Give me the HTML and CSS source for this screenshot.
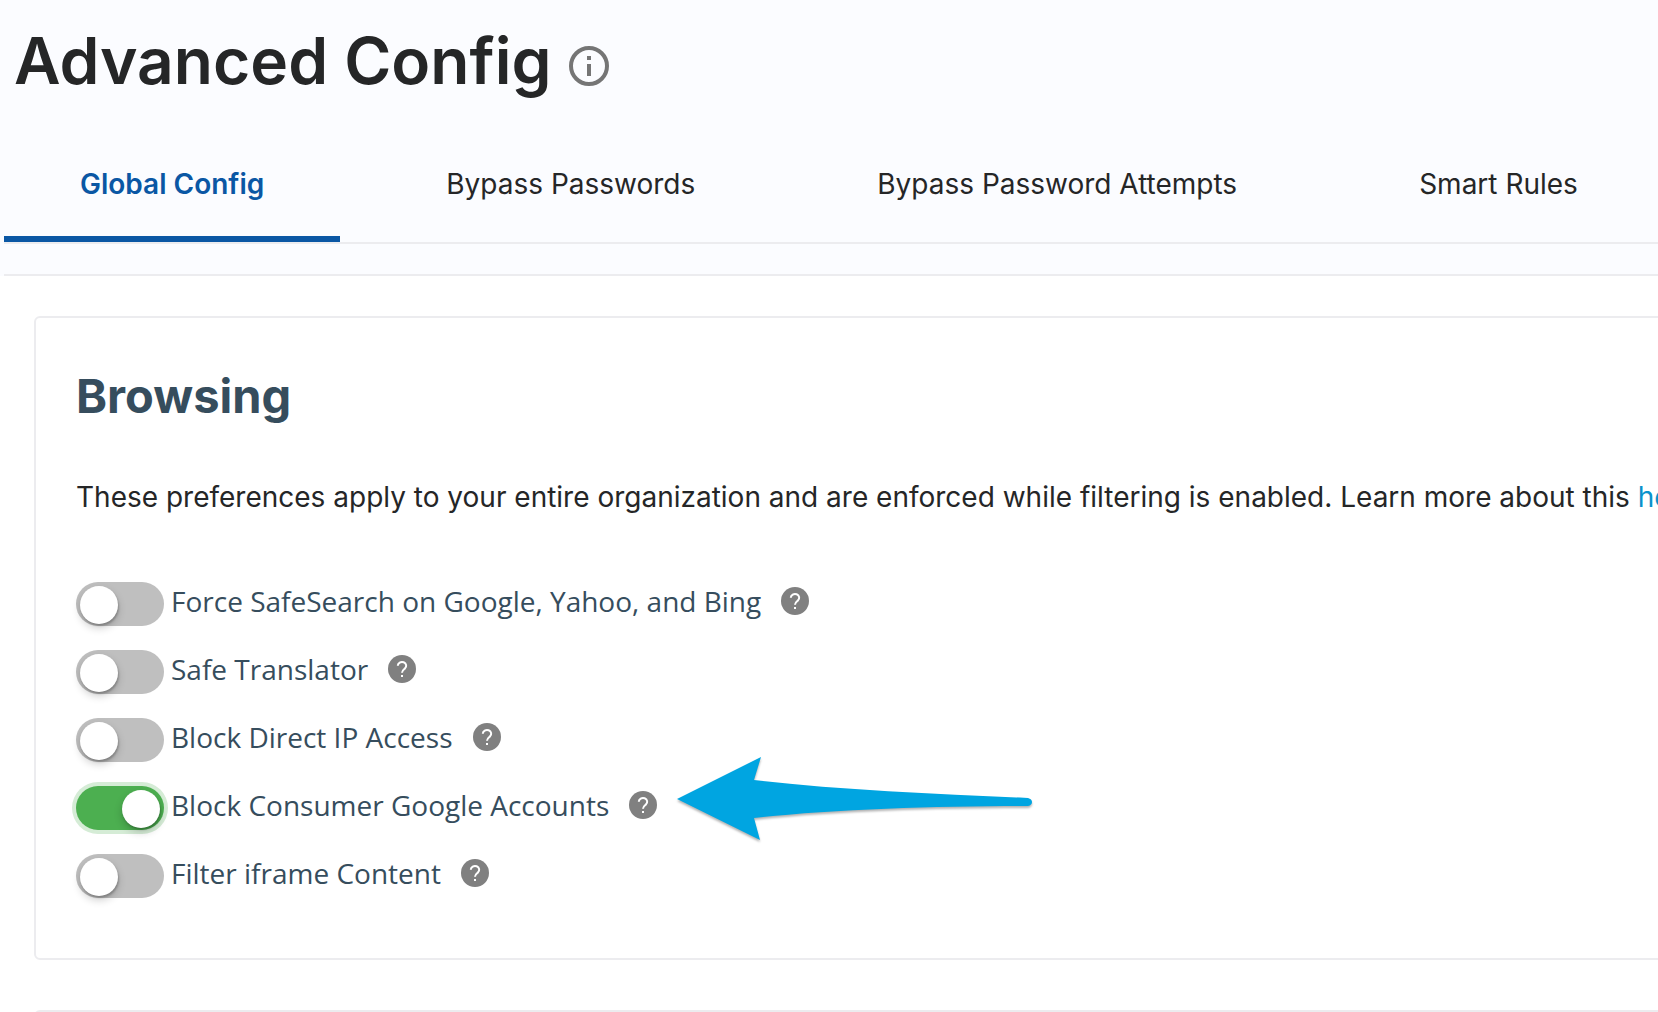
FILE: index.html
```
<!DOCTYPE html>
<html lang="en">
<head>
    <meta charset="UTF-8">
    <meta name="viewport" content="width=device-width, initial-scale=1.0">
    <title>Advanced Config</title>
    <link rel="stylesheet" href="styles.css">
</head>
<body>
    <!-- Shared help icon -->
    <svg class="sprite" aria-hidden="true">
        <symbol id="help" viewBox="0 0 28 28">
            <circle cx="14" cy="14" r="14" fill="#808080"/>
            <path d="M9.8 10.8a4.2 3.8 0 1 1 7 2.8c-1.6 1.3-2.8 2-2.8 4.2" fill="none" stroke="#fff" stroke-width="2"/>
            <path d="M13 20h2v2h-2z" fill="#fff"/>
        </symbol>
    </svg>

    <header class="page-header">
        <div class="title-row">
            <h1>Advanced Config</h1>
            <button class="info-btn" type="button" aria-label="About this page">
                <svg width="40" height="40" viewBox="0 0 40 40">
                    <circle cx="20" cy="20" r="18" fill="none" stroke="#757575" stroke-width="4"/>
                    <path d="M18 10h4v4h-4zM18 18h4v12h-4z" fill="#757575"/>
                </svg>
            </button>
        </div>
        <div class="tab-bar">
            <nav class="tabs">
                <a href="#global" class="tab active" aria-current="page">Global Config</a>
                <a href="#passwords" class="tab">Bypass Passwords</a>
                <a href="#attempts" class="tab">Bypass Password Attempts</a>
                <a href="#rules" class="tab">Smart Rules</a>
            </nav>
        </div>
    </header>

    <main class="content">
        <section class="card">
            <h2>Browsing</h2>
            <p class="intro">These preferences apply to your entire organization and are enforced while filtering is enabled. Learn more about this <a href="#help-article">here.</a></p>

            <ul class="options">
                <li class="option">
                    <input type="checkbox" class="toggle" id="safesearch">
                    <label for="safesearch">Force SafeSearch on Google, Yahoo, and Bing</label>
                    <button class="help-btn" type="button" aria-label="Help"><svg width="28" height="28"><use href="#help"/></svg></button>
                </li>
                <li class="option">
                    <input type="checkbox" class="toggle" id="translator">
                    <label for="translator">Safe Translator</label>
                    <button class="help-btn" type="button" aria-label="Help"><svg width="28" height="28"><use href="#help"/></svg></button>
                </li>
                <li class="option">
                    <input type="checkbox" class="toggle" id="direct-ip">
                    <label for="direct-ip">Block Direct IP Access</label>
                    <button class="help-btn" type="button" aria-label="Help"><svg width="28" height="28"><use href="#help"/></svg></button>
                </li>
                <li class="option">
                    <input type="checkbox" class="toggle" id="google-accounts" checked>
                    <label for="google-accounts">Block Consumer Google Accounts</label>
                    <button class="help-btn" type="button" aria-label="Help"><svg width="28" height="28"><use href="#help"/></svg></button>
                    <!-- Callout arrow -->
                    <svg class="arrow" width="360" height="88" viewBox="0 0 360 88" aria-hidden="true">
                        <path d="M1 43L85 1L78 24C165 34 260 38 352 42Q356 43 356 46Q356 49 352 50C260 50 160 53 78 62L84 84Z" fill="#00a5e1"/>
                    </svg>
                </li>
                <li class="option">
                    <input type="checkbox" class="toggle" id="iframe">
                    <label for="iframe">Filter iframe Content</label>
                    <button class="help-btn" type="button" aria-label="Help"><svg width="28" height="28"><use href="#help"/></svg></button>
                </li>
            </ul>
        </section>
        <section class="card"></section>
    </main>
</body>
</html>
```

FILE: styles.css
```
:root {
    --color-page: #fbfcff;
    --color-line: #ececef;
    --color-text: #252627;
    --color-heading: #364d5d;
    --color-primary: #0a57a4;
    --color-link: #0a92cc;
    --color-on: #4caf50;
    --color-off: #bfbfbf;
}

* {
    margin: 0;
    padding: 0;
    box-sizing: border-box;
}

body {
    font-family: 'Inter', sans-serif;
    font-size: 28px;
    line-height: 40px;
    color: var(--color-text);
    background: #fff;
    height: 100vh;
    overflow: hidden;
}

button {
    border: none;
    background: none;
    cursor: pointer;
}

svg {
    display: block;
}

.sprite {
    position: absolute;
    width: 0;
    height: 0;
}

/* Header */
.page-header {
    padding: 21px 0 0 4px;
    background: var(--color-page);
}

.title-row {
    display: flex;
    align-items: center;
    gap: 17px;
    padding-left: 10px;
}

h1 {
    font-size: 64px;
    line-height: 80px;
    font-weight: 600;
}

.info-btn {
    padding-top: 10px;
}

/* Tabs */
.tab-bar {
    margin-top: 43px;
    padding-bottom: 30px;
    border-bottom: 2px solid var(--color-line);
}

.tabs {
    display: flex;
    gap: 30px;
    border-bottom: 2px solid var(--color-line);
}

.tab {
    padding: 20px 76px 32px;
    border-bottom: 6px solid transparent;
    color: var(--color-text);
    text-decoration: none;
    white-space: nowrap;
}

.tab.active {
    color: var(--color-primary);
    border-color: var(--color-primary);
    font-weight: 600;
}

/* Cards run past the right edge */
.content {
    display: flex;
    flex-direction: column;
    gap: 50px;
    padding: 40px 0 0 34px;
}

.card {
    min-height: 120px;
    margin-right: -40px;
    padding: 48px 40px;
    border: 2px solid var(--color-line);
    border-radius: 6px;
}

h2 {
    font-size: 47px;
    line-height: 60px;
    font-weight: 700;
    color: var(--color-heading);
}

.intro {
    margin-top: 51px;
    white-space: nowrap;
}

.intro a {
    color: var(--color-link);
    text-decoration: none;
}

/* Options */
.options {
    margin-top: 53px;
    list-style: none;
}

.option {
    display: flex;
    align-items: center;
    height: 68px;
    position: relative;
    width: max-content;
}

.option label {
    margin-left: 7px;
    padding-bottom: 6px;
    font-family: 'Open Sans', sans-serif;
    color: var(--color-heading);
}

.help-btn {
    margin-left: 20px;
    padding-bottom: 6px;
}

.toggle {
    appearance: none;
    width: 88px;
    height: 44px;
    padding: 4px;
    border-radius: 22px;
    background: var(--color-off);
}

.toggle::before {
    content: "";
    display: block;
    width: 38px;
    height: 38px;
    border-radius: 50%;
    background: #fff;
    box-shadow: 0 4px 8px rgba(0, 0, 0, 0.2), 1px 2px 2px rgba(0, 0, 0, 0.2);
}

.toggle:checked {
    background: var(--color-on);
    box-shadow: 0 0 0 4px #d5ecd6;
}

.toggle:checked::before {
    margin-left: auto;
}

.arrow {
    position: absolute;
    left: 100%;
    top: -18px;
    margin-left: 19px;
    filter: drop-shadow(0 2px 1px rgba(0, 0, 0, 0.3));
}
```
